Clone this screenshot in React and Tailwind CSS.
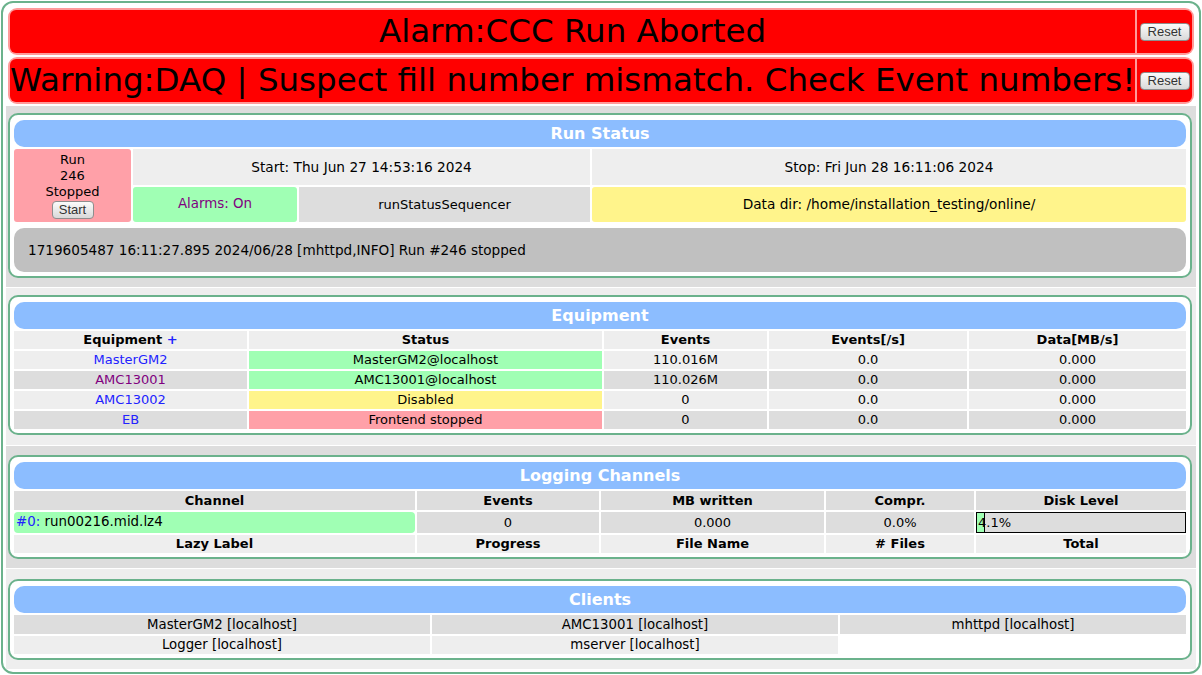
import React from 'react';

const font = { fontFamily: '"DejaVu Sans", Verdana, sans-serif' };

const Btn = ({ children, className = '' }) => (
  <button
    className={`h-[18px] rounded-[4px] border border-[#8e8e8e] bg-gradient-to-b from-[#fbfbfb] to-[#d9d9d9] text-[13px] leading-[14px] text-[#333] ${className}`}
    style={{ fontFamily: '"Liberation Sans", Arial, sans-serif' }}
  >
    {children}
  </button>
);

const AlarmBar = ({ text, center }) => (
  <div className="flex h-[47px] gap-[2px] p-[2px] rounded-[9px] bg-[#ff9a9a]">
    <div
      className={`flex-1 flex items-center rounded-l-[6px] bg-[#ff0000] text-[32.5px] leading-none text-black whitespace-nowrap overflow-hidden ${center ? 'justify-center' : 'pl-0'}`}
    >
      {text}
    </div>
    <div className="w-[55px] flex items-center justify-center rounded-r-[6px] bg-[#ff0000]">
      <Btn className="w-[50px]">Reset</Btn>
    </div>
  </div>
);

const Card = ({ title, children }) => (
  <div className="border-2 border-[#6bb28c] rounded-[10px] bg-white px-[4px] pt-[5px] pb-[4px]">
    <div className="h-[27px] mb-[2px] rounded-[10px] bg-[#8cbdff] flex items-center justify-center text-white font-bold text-[16px]">
      {title}
    </div>
    {children}
  </div>
);

const equipment = [
  { name: 'MasterGM2', link: 'text-[#2222ff]', status: 'MasterGM2@localhost', sbg: 'bg-[#a0ffb4]', ev: '110.016M', bg: 'bg-[#eeeeee]' },
  { name: 'AMC13001', link: 'text-[#800080]', status: 'AMC13001@localhost', sbg: 'bg-[#a0ffb4]', ev: '110.026M', bg: 'bg-[#dddddd]' },
  { name: 'AMC13002', link: 'text-[#2222ff]', status: 'Disabled', sbg: 'bg-[#fff48b]', ev: '0', bg: 'bg-[#eeeeee]' },
  { name: 'EB', link: 'text-[#2222ff]', status: 'Frontend stopped', sbg: 'bg-[#ffa0a8]', ev: '0', bg: 'bg-[#dddddd]' },
];

export default function App() {
  return (
    <div className="w-[1200px] m-px border-2 border-[#6bb28c] rounded-[12px] bg-white p-[3px] text-[13px] text-black" style={font}>
      <div className="flex flex-col gap-[2px] p-[2px]">
        <AlarmBar text="Alarm:CCC Run Aborted" center />
        <AlarmBar text="Warning:DAQ | Suspect fill number mismatch. Check Event numbers!" />
      </div>

      <div className="flex flex-col gap-px">
        <div className="bg-[#dddddd] pl-[2px] pr-[4px] pt-[7px] pb-[9px]">
          <Card title="Run Status">
            <div className="grid grid-cols-[117px_164px_291px_1fr] grid-rows-[36px_35px] gap-[2px]">
              <div className="row-span-2 rounded-[3px] bg-[#ffa0a8] flex flex-col items-center justify-center leading-[16px]">
                <div>Run</div>
                <div>246</div>
                <div>Stopped</div>
                <Btn className="w-[42px] mt-px">Start</Btn>
              </div>
              <div className="col-span-2 bg-[#eeeeee] flex items-center justify-center text-[13.7px]">Start: Thu Jun 27 14:53:16 2024</div>
              <div className="bg-[#eeeeee] flex items-center justify-center text-[13.7px]">Stop: Fri Jun 28 16:11:06 2024</div>
              <div className="rounded-[3px] bg-[#a0ffb4] flex items-center justify-center text-[#800080] text-[13.4px]">Alarms: On</div>
              <div className="bg-[#dddddd] flex items-center justify-center">runStatusSequencer</div>
              <div className="rounded-[3px] bg-[#fff48b] flex items-center justify-center text-[13.7px]">Data dir: /home/installation_testing/online/</div>
            </div>
            <div className="mt-[6px] h-[44px] rounded-[10px] bg-[#c0c0c0] flex items-center pl-[14px] text-[13.6px]">
              1719605487 16:11:27.895 2024/06/28 [mhttpd,INFO] Run #246 stopped
            </div>
          </Card>
        </div>

        <div className="bg-[#eeeeee] pl-[2px] pr-[4px] pt-[7px] pb-[10px]">
          <Card title="Equipment">
            <div className="grid grid-cols-[233px_353px_163px_198px_1fr] auto-rows-[18px] gap-[2px] text-center">
              <div className="bg-[#eeeeee] font-bold flex items-center justify-center">Equipment&nbsp;<span className="text-[#2222ff]">+</span></div>
              <div className="bg-[#eeeeee] font-bold flex items-center justify-center">Status</div>
              <div className="bg-[#eeeeee] font-bold flex items-center justify-center">Events</div>
              <div className="bg-[#eeeeee] font-bold flex items-center justify-center">Events[/s]</div>
              <div className="bg-[#eeeeee] font-bold flex items-center justify-center">Data[MB/s]</div>
              {equipment.map((e) => (
                <React.Fragment key={e.name}>
                  <div className={`${e.bg} ${e.link} flex items-center justify-center`}>{e.name}</div>
                  <div className={`${e.sbg} flex items-center justify-center`}>{e.status}</div>
                  <div className={`${e.bg} flex items-center justify-center`}>{e.ev}</div>
                  <div className={`${e.bg} flex items-center justify-center`}>0.0</div>
                  <div className={`${e.bg} flex items-center justify-center`}>0.000</div>
                </React.Fragment>
              ))}
            </div>
          </Card>
        </div>

        <div className="bg-[#dddddd] pl-[2px] pr-[4px] pt-[9px] pb-[9px]">
          <Card title="Logging Channels">
            <div className="grid grid-cols-[401px_182px_223px_148px_1fr] grid-rows-[19px_21px_18px] gap-[2px] text-center">
              {['Channel', 'Events', 'MB written', 'Compr.', 'Disk Level'].map((h) => (
                <div key={h} className="bg-[#dddddd] font-bold flex items-center justify-center">{h}</div>
              ))}
              <div className="rounded-[4px] bg-[#a0ffb4] flex items-center pl-[2px] text-[13.4px]">
                <span className="text-[#2222ff]">#0:</span>&nbsp;run00216.mid.lz4
              </div>
              <div className="bg-[#dddddd] flex items-center justify-center">0</div>
              <div className="bg-[#dddddd] flex items-center justify-center">0.000</div>
              <div className="bg-[#dddddd] flex items-center justify-center">0.0%</div>
              <div className="relative bg-[#dddddd] border border-black flex items-center">
                <div className="absolute left-0 top-0 bottom-0 w-[8px] bg-[#a0ffb4] border-r border-black" />
                <span className="relative pl-[1px]">4.1%</span>
              </div>
              {['Lazy Label', 'Progress', 'File Name', '# Files', 'Total'].map((h) => (
                <div key={h} className="bg-[#eeeeee] font-bold flex items-center justify-center">{h}</div>
              ))}
            </div>
          </Card>
        </div>

        <div className="bg-[#eeeeee] pl-[2px] pr-[4px] pt-[10px] pb-[9px]">
          <Card title="Clients">
            <div className="grid grid-cols-[416px_406px_1fr] grid-rows-[19px_18px] gap-[2px] text-center text-[13.3px]">
              <div className="bg-[#dddddd] flex items-center justify-center">MasterGM2 [localhost]</div>
              <div className="bg-[#dddddd] flex items-center justify-center">AMC13001 [localhost]</div>
              <div className="bg-[#dddddd] flex items-center justify-center">mhttpd [localhost]</div>
              <div className="bg-[#eeeeee] flex items-center justify-center">Logger [localhost]</div>
              <div className="bg-[#eeeeee] flex items-center justify-center">mserver [localhost]</div>
              <div />
            </div>
          </Card>
        </div>
      </div>
    </div>
  );
}
